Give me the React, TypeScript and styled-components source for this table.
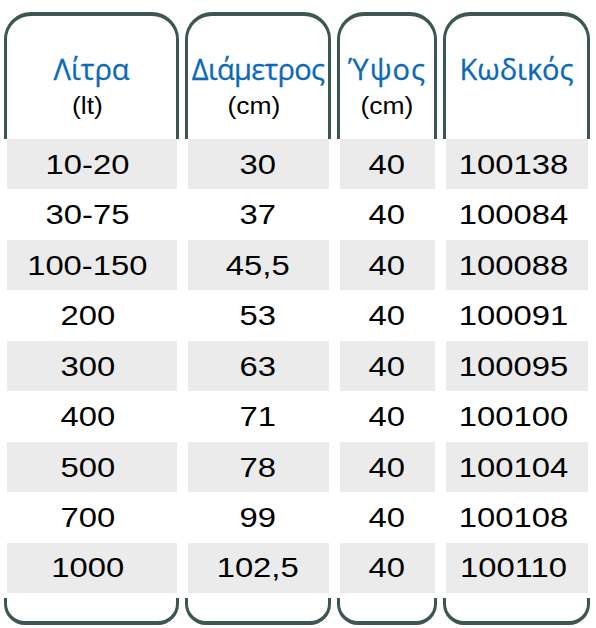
import styled, { createGlobalStyle } from "styled-components";

const GlobalStyle = createGlobalStyle`
  html, body {
    margin: 0;
    padding: 0;
    background: #fff;
  }
`;

const BORDER = "#3c5653";
const BLUE = "#0b69b7";
const STRIPE = "#ebebeb";

interface Column {
  key: "litra" | "diam" | "ypsos" | "code";
  title: string;
  unit?: string;
  width: number;
  shift: number;
  unitShift: number;
  tracking: number;
}

const columns: Column[] = [
  { key: "litra", title: "Λίτρα", unit: "(lt)", width: 175, shift: 9, unitShift: 9, tracking: 0 },
  { key: "diam", title: "Διάμετρος", unit: "(cm)", width: 146, shift: 1, unitShift: 9, tracking: -0.7 },
  { key: "ypsos", title: "Ύψος", unit: "(cm)", width: 100, shift: 1, unitShift: 0, tracking: 1 },
  { key: "code", title: "Κωδικός", width: 147, shift: 7, unitShift: 0, tracking: 0 },
];

const rows = [
  { litra: "10-20", diam: "30", ypsos: "40", code: "100138" },
  { litra: "30-75", diam: "37", ypsos: "40", code: "100084" },
  { litra: "100-150", diam: "45,5", ypsos: "40", code: "100088" },
  { litra: "200", diam: "53", ypsos: "40", code: "100091" },
  { litra: "300", diam: "63", ypsos: "40", code: "100095" },
  { litra: "400", diam: "71", ypsos: "40", code: "100100" },
  { litra: "500", diam: "78", ypsos: "40", code: "100104" },
  { litra: "700", diam: "99", ypsos: "40", code: "100108" },
  { litra: "1000", diam: "102,5", ypsos: "40", code: "100110" },
];

export default function App() {
  return (
    <>
      <GlobalStyle />
      <Table>
        {columns.map((col) => (
          <ColumnWrapper key={col.key} width={col.width}>
            <Header>
              <Title tracking={col.tracking}>{col.title}</Title>
              {col.unit && (
                <Unit shift={col.unitShift}>
                  <Stretch>{col.unit}</Stretch>
                </Unit>
              )}
            </Header>
            {rows.map((row, i) => (
              <Cell key={i} striped={i % 2 === 0} shift={col.shift}>
                <Stretch>{row[col.key]}</Stretch>
              </Cell>
            ))}
            <Footer />
          </ColumnWrapper>
        ))}
      </Table>
    </>
  );
}

const Table = styled.div`
  display: flex;
  align-items: flex-start;
  gap: 6px;
  padding: 12px 0 0 4px;
`;

const ColumnWrapper = styled.div<{ width: number }>`
  display: flex;
  flex-direction: column;
  width: ${(p) => p.width}px;
  flex-shrink: 0;
`;

const Header = styled.div`
  box-sizing: border-box;
  height: 127px;
  border: 3px solid ${BORDER};
  border-top-width: 4px;
  border-bottom: none;
  border-radius: 27px 27px 0 0;
  display: flex;
  flex-direction: column;
  align-items: center;
  padding-top: 38px;
`;

const Title = styled.div<{ tracking: number }>`
  font-family: "Open Sans", "Noto Sans", sans-serif;
  font-size: 29px;
  line-height: 1;
  letter-spacing: ${(p) => p.tracking}px;
  color: ${BLUE};
  white-space: nowrap;
  -webkit-text-stroke: 0.3px ${BLUE};
`;

const Unit = styled.div<{ shift: number }>`
  font-family: "Liberation Sans", Arial, sans-serif;
  font-size: 23px;
  line-height: 1;
  color: #000;
  margin-top: 12px;
  padding-right: ${(p) => p.shift}px;
`;

const Stretch = styled.span`
  display: inline-block;
  transform: scaleX(1.15);
  white-space: nowrap;
`;

const Cell = styled.div<{ striped: boolean; shift: number }>`
  height: 50.44px;
  margin: 0 2px 0 3px;
  display: flex;
  align-items: center;
  justify-content: center;
  padding-right: ${(p) => p.shift}px;
  background: ${(p) => (p.striped ? STRIPE : "transparent")};
  font-family: "Liberation Sans", Arial, sans-serif;
  font-size: 28.5px;
  line-height: 1;
  color: #000;
`;

const Footer = styled.div`
  box-sizing: border-box;
  height: 27px;
  margin-top: 5px;
  border: 3px solid ${BORDER};
  border-bottom-width: 4px;
  border-top: none;
  border-radius: 0 0 21px 21px;
`;
